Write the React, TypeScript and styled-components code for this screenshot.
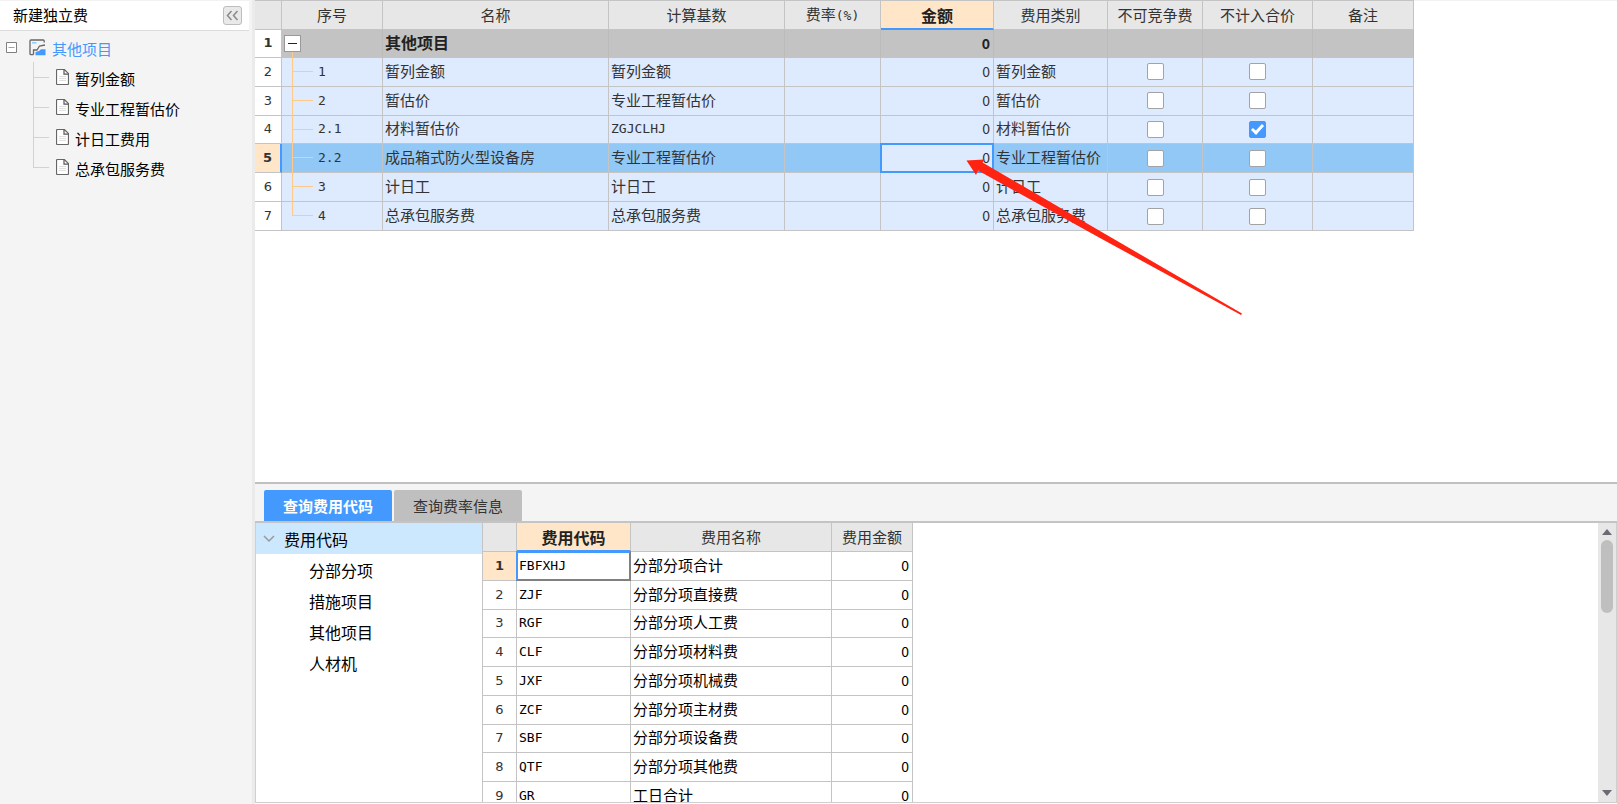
import React, { useState } from 'react';
import styled, { createGlobalStyle, css } from 'styled-components';

const cjk = '"Noto Sans CJK SC", sans-serif';
const mono = '"DejaVu Sans Mono", "Noto Sans CJK SC", monospace';
const line = '#c4c4c4';
const blue = '#4499ff';
const branch = '#ffc987';

const GlobalStyle = createGlobalStyle`
  *, *::before, *::after { box-sizing: border-box; }
  body { margin: 0; font-family: ${cjk}; font-size: 15px; color: #000; background: #fff; }
  button { font: inherit; color: inherit; padding: 0; border: 0; background: none; cursor: pointer; }
  ul { list-style: none; margin: 0; padding: 0; }
`;

const Page = styled.div`
  display: flex;
  height: 100vh;
  overflow: hidden;
`;

const Sidebar = styled.aside`
  flex: 0 0 255px;
  background: #f4f4f4;
  border-right: 3px solid #ebebeb;
`;

const SidebarHeader = styled.header`
  display: flex;
  align-items: center;
  justify-content: space-between;
  height: 31px;
  margin-right: 3px;
  padding: 0 7px 0 13px;
  background: #fff;
  border-top: 1px solid #f2f2f2;
  border-bottom: 1px solid #dcdcdc;
`;

const HeaderButton = styled.button`
  padding-bottom: 2px;
  line-height: 24px;
`;

const CollapseButton = styled.button`
  display: grid;
  place-items: center;
  width: 19px;
  height: 19px;
  border: 1px solid #bdbdbd;
  border-radius: 3px;
  background: #e9e9e9;
`;

const Tree = styled.ul`
  padding-top: 1px;
`;

const RootRow = styled.div`
  display: flex;
  align-items: center;
  height: 30px;
  padding-left: 6px;
`;

const TreeToggle = styled.button`
  display: flex;
  margin-right: 12px;
`;

const TreeLabel = styled.a<{ $active?: boolean }>`
  margin-left: 6px;
  padding-top: 3px;
  line-height: 22px;
  color: ${(p) => (p.$active ? blue : '#000')};
  text-decoration: none;
`;

const LeafRow = styled.li`
  display: flex;
  align-items: center;
  height: 30px;
  padding-left: 56px;
  position: relative;

  &::before {
    content: '';
    position: absolute;
    left: 33px;
    top: 0;
    width: 1px;
    height: 100%;
    background: ${branch};
  }
  &:last-child::before { height: 50%; }
  &::after {
    content: '';
    position: absolute;
    left: 33px;
    top: 15px;
    width: 16px;
    height: 1px;
    background: ${branch};
  }
`;

const Main = styled.main`
  flex: 1;
  min-width: 0;
  display: flex;
  flex-direction: column;
`;

const FeeArea = styled.section`
  position: relative;
  flex: 1;
  min-height: 0;
  box-shadow: inset 0 1px #f2f2f2;
`;

const Arrow = styled.svg`
  position: absolute;
  left: 711px;
  top: 159px;
  pointer-events: none;
`;

const Grid = styled.table<{ $width: number; $height: number; $topLine?: boolean }>`
  table-layout: fixed;
  border-collapse: separate;
  border-spacing: 0;
  width: ${(p) => p.$width}px;
  height: ${(p) => p.$height}px;
  border-top: ${(p) => (p.$topLine ? `1px solid ${line}` : '0')};
  font-size: 15px;
  line-height: 22px;
`;

const HeadCell = styled.th<{ $active?: boolean }>`
  height: 29px;
  padding: 0;
  font-weight: 400;
  color: #333;
  background: #e7e7e7;
  border-right: 1px solid ${line};
  border-bottom: 1px solid ${line};
  white-space: nowrap;
  ${(p) =>
    p.$active &&
    css`
      font-size: 16px;
      font-weight: 700;
      color: #222;
      background: #ffe6c8;
      border-bottom: 2px solid ${blue};
    `}
`;

const RowNumber = styled.th<{ $active?: boolean; $strong?: boolean; $edge?: boolean }>`
  padding: 0;
  font: ${(p) => (p.$active || p.$strong ? 700 : 400)} 13px/22px 'DejaVu Sans', sans-serif;
  color: #333;
  background: ${(p) => (p.$active ? '#ffe6c8' : '#fff')};
  border-right: ${(p) => (p.$active && p.$edge ? `2px solid ${blue}` : `1px solid ${line}`)};
  border-bottom: 1px solid ${line};
`;

const Cell = styled.td<{ $align?: 'right' | 'center'; $focus?: 'edit' | 'select' }>`
  position: relative;
  padding: ${(p) => (p.$align === 'center' ? '0' : '0 3px 2px 2px')};
  text-align: ${(p) => p.$align ?? 'left'};
  border-right: 1px solid ${line};
  border-bottom: 1px solid ${line};
  white-space: nowrap;
  ${(p) =>
    p.$focus === 'edit' &&
    css`
      background: #deeafe;
      &::after {
        content: '';
        position: absolute;
        inset: -1px;
        border: 2px solid ${blue};
      }
    `}
  ${(p) =>
    p.$focus === 'select' &&
    css`
      &::after {
        content: '';
        position: absolute;
        inset: -1px;
        border: 2px solid #808080;
        border-top-color: ${blue};
        border-left-color: ${blue};
      }
    `}
`;

const TreeCell = styled(Cell)<{ $last?: boolean }>`
  padding-left: 36px;
  &::before {
    content: '';
    position: absolute;
    left: 10px;
    top: 0;
    width: 1px;
    height: ${(p) => (p.$last ? '13px' : 'calc(100% + 1px)')};
    background: ${branch};
    z-index: 1;
  }
  &::after {
    content: '';
    position: absolute;
    left: 10px;
    top: 13px;
    width: 21px;
    height: 1px;
    background: ${branch};
  }
`;

const RootCell = styled(Cell)`
  padding-bottom: 0;
  &::after {
    content: '';
    position: absolute;
    left: 10px;
    bottom: -1px;
    width: 1px;
    height: 6px;
    background: ${branch};
    z-index: 1;
  }
`;

const GridToggle = styled.button`
  display: grid;
  place-items: center;
  width: 17px;
  height: 17px;
  background: #fff;
  border: 1px solid #999;
`;

const FeeRow = styled.tr<{ $kind?: 'root' | 'active' }>`
  color: #333;
  background: ${(p) => (p.$kind === 'root' ? '#c3c3c3' : p.$kind === 'active' ? '#92c8f6' : '#deeafe')};
  ${(p) =>
    p.$kind === 'root' &&
    css`
      font-size: 16px;
      font-weight: 700;
      color: #222;
      & > td { border-right-color: #bbb; }
    `}
`;

const Code = styled.span`
  font-family: ${mono};
  font-size: 13px;
`;

const Amount = styled.span`
  font-size: 14px;
`;

const Check = styled.input`
  appearance: none;
  position: relative;
  display: block;
  width: 17px;
  height: 17px;
  margin: 0 auto;
  border: 1px solid #a3a3a3;
  border-radius: 2px;
  background: #fff;

  &:checked { background: ${blue}; border-color: ${blue}; }
  &:checked::after {
    content: '';
    position: absolute;
    left: 4px;
    top: 0;
    width: 7px;
    height: 12px;
    border: solid #fff;
    border-width: 0 3px 3px 0;
    transform: rotate(42deg);
  }
`;

const QueryPanel = styled.section`
  flex: 0 0 322px;
  min-height: 0;
  display: flex;
  flex-direction: column;
  border-top: 2px solid #c0c0c0;
  padding-bottom: 1px;
`;

const TabBar = styled.div`
  flex: none;
  display: flex;
  align-items: flex-end;
  gap: 2px;
  height: 39px;
  padding-left: 9px;
  background: #f4f4f4;
  border-bottom: 2px solid #c4c4c4;
`;

const Tab = styled.button<{ $active: boolean }>`
  width: 128px;
  height: 31px;
  padding-bottom: 1px;
  border-radius: 2px 2px 0 0;
  font-weight: ${(p) => (p.$active ? 700 : 400)};
  color: ${(p) => (p.$active ? '#fff' : '#333')};
  background: ${(p) => (p.$active ? blue : '#bfbfbf')};
`;

const QueryBody = styled.div`
  flex: 1;
  min-height: 0;
  display: flex;
  border: solid #cfcfcf;
  border-width: 0 1px 1px 1px;
`;

const CategoryList = styled.nav`
  flex: 0 0 227px;
  border-right: 1px solid ${line};
`;

const Category = styled.a<{ $root?: boolean }>`
  display: flex;
  align-items: center;
  gap: 9px;
  height: 31px;
  padding-left: ${(p) => (p.$root ? 7 : 53)}px;
  font-size: 16px;
  color: #000;
  text-decoration: none;
  background: ${(p) => (p.$root ? '#cce8ff' : 'transparent')};
`;

const CodeArea = styled.div`
  flex: 1;
  min-width: 0;
  overflow: hidden;
`;

const ScrollBar = styled.div`
  display: flex;
  flex-direction: column;
  align-items: center;
  width: 18px;
  padding: 6px 0;
  background: #e7e7e7;
`;

const ScrollButton = styled.button`
  display: flex;
  height: 6px;
`;

const Thumb = styled.div`
  width: 12px;
  height: 73px;
  margin: 5px 0 auto;
  border-radius: 6px;
  background: #bfbfbf;
`;

const DocIcon = () => (
  <svg width="13" height="16" viewBox="0 0 13 16" fill="#fff" stroke="#666" aria-hidden="true">
    <path d="M1.5.5h6.8l4.2 4.2v9.8a1 1 0 0 1-1 1h-10a1 1 0 0 1-1-1v-13a1 1 0 0 1 1-1z" strokeWidth="1.2" />
    <path d="M8 .8v4.4h4.4" fill="none" stroke="#555" strokeWidth="1.2" />
    <path d="M3 7.5h7M3 9.5h7M3 11.5h7" stroke="#e0e0e0" />
  </svg>
);

const ProjectIcon = () => (
  <svg width="17" height="17" viewBox="0 0 17 17" fill="none" aria-hidden="true">
    <path
      d="M4.500 15.700H2A1 1 0 0 1 1 14.700V2A1 1 0 0 1 2 1H14.200a1 1 0 0 1 1 1v1.500"
      stroke="#666"
      strokeWidth="1.300"
    />
    <path d="M4.500 15.500v-4.500H8l2.500-4 5.500-1" stroke="#666" strokeWidth="1.300" />
    <path d="M3 3.800h4.500" stroke="#8ccfff" strokeWidth="1.600" />
    <path d="M6.500 16.300v-3.300l3.500-1 2-1.800h4.500v6.100z" fill={blue} />
  </svg>
);

const sideItems = ['暂列金额', '专业工程暂估价', '计日工费用', '总承包服务费'];

const feeColumns: { label: React.ReactNode; width: number; active?: boolean }[] = [
  { label: '', width: 27 },
  { label: '序号', width: 101 },
  { label: '名称', width: 226 },
  { label: '计算基数', width: 176 },
  { label: <>费率<Code>(%)</Code></>, width: 96 },
  { label: '金额', width: 113, active: true },
  { label: '费用类别', width: 114 },
  { label: '不可竞争费', width: 95 },
  { label: '不计入合价', width: 110 },
  { label: '备注', width: 101 },
];

const fees = [
  { no: '1', name: '暂列金额', base: '暂列金额', kind: '暂列金额' },
  { no: '2', name: '暂估价', base: '专业工程暂估价', kind: '暂估价' },
  { no: '2.1', name: '材料暂估价', base: 'ZGJCLHJ', kind: '材料暂估价', isCode: true, excluded: true },
  { no: '2.2', name: '成品箱式防火型设备房', base: '专业工程暂估价', kind: '专业工程暂估价', active: true },
  { no: '3', name: '计日工', base: '计日工', kind: '计日工' },
  { no: '4', name: '总承包服务费', base: '总承包服务费', kind: '总承包服务费' },
];

const codes = [
  ['FBFXHJ', '分部分项合计'],
  ['ZJF', '分部分项直接费'],
  ['RGF', '分部分项人工费'],
  ['CLF', '分部分项材料费'],
  ['JXF', '分部分项机械费'],
  ['ZCF', '分部分项主材费'],
  ['SBF', '分部分项设备费'],
  ['QTF', '分部分项其他费'],
  ['GR', '工日合计'],
];

const tabs = ['查询费用代码', '查询费率信息'];

function FeeTable() {
  return (
    <Grid $width={1159} $height={231} $topLine>
      <colgroup>
        {feeColumns.map((c, i) => (
          <col key={i} width={c.width} />
        ))}
      </colgroup>
      <thead>
        <tr>
          {feeColumns.map((c, i) => (
            <HeadCell key={i} scope="col" $active={c.active}>{c.label}</HeadCell>
          ))}
        </tr>
      </thead>
      <tbody>
        <FeeRow $kind="root">
          <RowNumber scope="row" $strong>1</RowNumber>
          <RootCell>
            <GridToggle aria-label="折叠">
              <svg width="9" height="9" viewBox="0 0 9 9" aria-hidden="true"><path d="M0 4.500h9" stroke="#222" /></svg>
            </GridToggle>
          </RootCell>
          <Cell>其他项目</Cell>
          <Cell />
          <Cell />
          <Cell $align="right"><Amount>0</Amount></Cell>
          <Cell />
          <Cell />
          <Cell />
          <Cell />
        </FeeRow>
        {fees.map((f, i) => (
          <FeeRow key={f.no} $kind={f.active ? 'active' : undefined}>
            <RowNumber scope="row" $active={f.active} $edge>{i + 2}</RowNumber>
            <TreeCell $last={i === fees.length - 1}><Code>{f.no}</Code></TreeCell>
            <Cell>{f.name}</Cell>
            <Cell>{f.isCode ? <Code>{f.base}</Code> : f.base}</Cell>
            <Cell />
            <Cell $align="right" $focus={f.active ? 'edit' : undefined}><Amount>0</Amount></Cell>
            <Cell>{f.kind}</Cell>
            <Cell $align="center"><Check type="checkbox" aria-label={`${f.name} 不可竞争费`} /></Cell>
            <Cell $align="center">
              <Check type="checkbox" defaultChecked={f.excluded} aria-label={`${f.name} 不计入合价`} />
            </Cell>
            <Cell />
          </FeeRow>
        ))}
      </tbody>
    </Grid>
  );
}

function CodeTable() {
  return (
    <Grid $width={430} $height={288}>
      <colgroup>
        <col width={34} />
        <col width={114} />
        <col width={201} />
        <col width={81} />
      </colgroup>
      <thead>
        <tr>
          <HeadCell />
          <HeadCell scope="col" $active>费用代码</HeadCell>
          <HeadCell scope="col">费用名称</HeadCell>
          <HeadCell scope="col">费用金额</HeadCell>
        </tr>
      </thead>
      <tbody>
        {codes.map(([code, name], i) => (
          <tr key={code}>
            <RowNumber scope="row" $active={i === 0}>{i + 1}</RowNumber>
            <Cell $focus={i === 0 ? 'select' : undefined}><Code>{code}</Code></Cell>
            <Cell>{name}</Cell>
            <Cell $align="right"><Amount>0</Amount></Cell>
          </tr>
        ))}
      </tbody>
    </Grid>
  );
}

export default function App() {
  const [tab, setTab] = useState(0);
  return (
    <>
      <GlobalStyle />
      <Page>
        <Sidebar>
          <SidebarHeader>
            <HeaderButton>新建独立费</HeaderButton>
            <CollapseButton aria-label="收起">
              <svg width="13" height="11" viewBox="0 0 13 11" fill="none" stroke="#8a8a8a" strokeWidth="1.500" aria-hidden="true">
                <path d="M5.500 1 1.500 5.500l4 4.500M11.500 1l-4 4.500 4 4.500" />
              </svg>
            </CollapseButton>
          </SidebarHeader>
          <Tree>
            <li>
              <RootRow>
                <TreeToggle aria-label="折叠">
                  <svg width="11" height="11" viewBox="0 0 11 11" aria-hidden="true">
                    <path d="M.5.5h10v10H.5z" fill="#fff" stroke="#808080" />
                    <path d="M2.500 5.500h6" stroke="#5bb8e8" />
                  </svg>
                </TreeToggle>
                <ProjectIcon />
                <TreeLabel href="#" $active>其他项目</TreeLabel>
              </RootRow>
              <ul>
                {sideItems.map((s) => (
                  <LeafRow key={s}>
                    <DocIcon />
                    <TreeLabel href="#">{s}</TreeLabel>
                  </LeafRow>
                ))}
              </ul>
            </li>
          </Tree>
        </Sidebar>
        <Main>
          <FeeArea>
            <FeeTable />
            <Arrow width="276" height="157" viewBox="966 159 276 157" aria-hidden="true">
              <path d="M966.500 160.500 984.500 159.500 982.500 162.500 1100 231 1242 313.500 1241 315 1100 238 978 170.500 976 175z" fill="#ff2312" />
            </Arrow>
          </FeeArea>
          <QueryPanel>
            <TabBar role="tablist">
              {tabs.map((t, i) => (
                <Tab key={t} role="tab" aria-selected={tab === i} $active={tab === i} onClick={() => setTab(i)}>{t}</Tab>
              ))}
            </TabBar>
            <QueryBody>
              <CategoryList>
                <Category href="#" $root>
                  <svg width="12" height="8" viewBox="0 0 12 8" fill="none" stroke="#999" strokeWidth="1.500" aria-hidden="true">
                    <path d="m1 1 5 5 5-5" />
                  </svg>
                  费用代码
                </Category>
                {['分部分项', '措施项目', '其他项目', '人材机'].map((c) => (
                  <Category key={c} href="#">{c}</Category>
                ))}
              </CategoryList>
              <CodeArea><CodeTable /></CodeArea>
              <ScrollBar>
                <ScrollButton aria-label="向上滚动">
                  <svg width="10" height="6" aria-hidden="true"><path d="M0 6 5 0l5 6z" fill="#6b6b75" /></svg>
                </ScrollButton>
                <Thumb />
                <ScrollButton aria-label="向下滚动">
                  <svg width="10" height="6" aria-hidden="true"><path d="m0 0 5 6 5-6z" fill="#6b6b75" /></svg>
                </ScrollButton>
              </ScrollBar>
            </QueryBody>
          </QueryPanel>
        </Main>
      </Page>
    </>
  );
}
